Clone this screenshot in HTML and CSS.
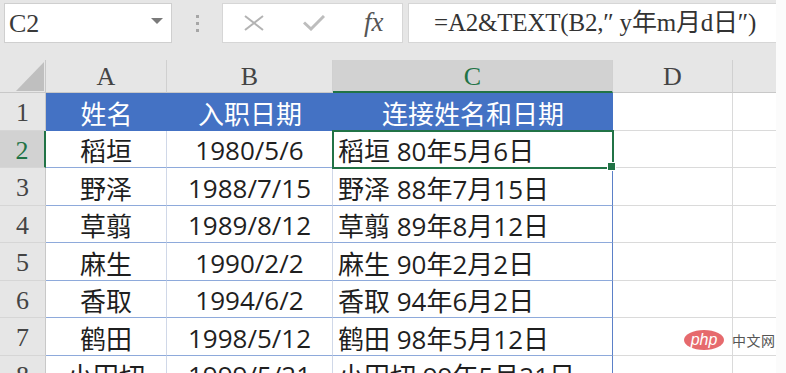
FILE: index.html
```html
<!DOCTYPE html>
<html lang="zh">
<head>
<meta charset="utf-8">
<title>Excel TEXT</title>
<link rel="stylesheet" href="styles.css">
</head>
<body>
<div class="screen">
  <div class="app">
    <div class="toolbar">
      <div class="namebox"><span class="ref">C2</span><span class="caret"></span></div>
      <div class="grip"><i></i><i></i><i></i></div>
      <div class="fxgroup">
        <svg class="ico-x" width="20" height="16" viewBox="0 0 20 16"><path d="M1 1 L19 15 M19 1 L1 15" stroke="#b3b3b3" stroke-width="2" fill="none"/></svg>
        <svg class="ico-ok" width="22" height="16" viewBox="0 0 22 16"><path d="M1 7.5 L8 14 L21 1" stroke="#bdbdbd" stroke-width="3" fill="none"/></svg>
        <span class="fx">fx</span>
      </div>
      <div class="formula">=A2&amp;TEXT(B2,″ y年m月d日″)</div>
    </div>
    <div class="sheet">
      <div class="corner"><span class="tri"></span></div>
      <div class="colh">A</div>
      <div class="colh">B</div>
      <div class="colh sel">C</div>
      <div class="colh">D</div>
      <div class="colh last"></div>

      <div class="rowh">1</div>
      <div class="th">姓名</div>
      <div class="th">入职日期</div>
      <div class="th">连接姓名和日期</div>
      <div class="cell"></div>
      <div class="cell last"></div>

      <div class="rowh sel">2</div>
      <div class="td">稻垣</div>
      <div class="td">1980/5/6</div>
      <div class="td tc active">稻垣 80年5月6日<span class="handle"></span></div>
      <div class="cell"></div>
      <div class="cell last"></div>

      <div class="rowh">3</div>
      <div class="td">野泽</div>
      <div class="td">1988/7/15</div>
      <div class="td tc">野泽 88年7月15日</div>
      <div class="cell"></div>
      <div class="cell last"></div>

      <div class="rowh">4</div>
      <div class="td">草翦</div>
      <div class="td">1989/8/12</div>
      <div class="td tc">草翦 89年8月12日</div>
      <div class="cell"></div>
      <div class="cell last"></div>

      <div class="rowh">5</div>
      <div class="td">麻生</div>
      <div class="td">1990/2/2</div>
      <div class="td tc">麻生 90年2月2日</div>
      <div class="cell"></div>
      <div class="cell last"></div>

      <div class="rowh">6</div>
      <div class="td">香取</div>
      <div class="td">1994/6/2</div>
      <div class="td tc">香取 94年6月2日</div>
      <div class="cell"></div>
      <div class="cell last"></div>

      <div class="rowh">7</div>
      <div class="td">鹤田</div>
      <div class="td">1998/5/12</div>
      <div class="td tc">鹤田 98年5月12日</div>
      <div class="cell"></div>
      <div class="cell last"></div>

      <div class="rowh">8</div>
      <div class="td">小田切</div>
      <div class="td">1999/5/21</div>
      <div class="td tc">小田切 99年5月21日</div>
      <div class="cell"></div>
      <div class="cell last"></div>
    </div>
    <div class="watermark"><span class="php">php</span><span class="cn">中文网</span></div>
  </div>
  <div class="strip"></div>
</div>
</body>
</html>
```
FILE: styles.css
```css
* { box-sizing: border-box; }
html, body { margin: 0; padding: 0; }
body {
  width: 786px;
  height: 373px;
  overflow: hidden;
  background: #fbfbfb;
}
.screen {
  display: flex;
  width: 786px;
  height: 373px;
  overflow: hidden;
}
.app {
  position: relative;
  width: 776px;
  flex: none;
  background: #e6e6e6;
}
.strip {
  flex: 1;
  background: #fbfbfb;
}

/* toolbar */
.toolbar {
  display: flex;
  align-items: flex-start;
  height: 60px;
  padding-top: 3px;
}
.namebox {
  margin-left: 4px;
  width: 168px;
  height: 40px;
  background: #fff;
  border: 1px solid #cfcfcf;
  display: flex;
  align-items: center;
  justify-content: space-between;
  padding: 0 8px 0 4px;
}
.ref {
  font-family: "Liberation Serif", serif;
  font-size: 26px;
  color: #3a3a3a;
  line-height: 1;
  padding-top: 2px;
}
.caret {
  width: 0;
  height: 0;
  border-left: 6px solid transparent;
  border-right: 6px solid transparent;
  border-top: 6px solid #7a7a7a;
  margin-top: -4px;
}
.grip {
  width: 50px;
  height: 40px;
  display: flex;
  flex-direction: column;
  align-items: center;
  justify-content: center;
  gap: 4px;
}
.grip i {
  display: block;
  width: 3px;
  height: 3px;
  background: #a6a6a6;
}
.fxgroup {
  width: 181px;
  height: 40px;
  background: #fff;
  border: 1px solid #d6d6d6;
  display: flex;
  align-items: center;
  padding-left: 21px;
}
.ico-x { margin-right: 39px; }
.ico-ok { margin-right: 39px; }
.fx {
  font-family: "Liberation Serif", serif;
  font-style: italic;
  font-size: 27px;
  color: #555;
  line-height: 1;
  margin-top: -2px;
}
.formula {
  margin-left: 5px;
  flex: 1;
  height: 40px;
  background: #fff;
  border: 1px solid #d6d6d6;
  border-right: none;
  font-family: "Liberation Serif", "Noto Sans CJK SC", serif;
  font-size: 25px;
  color: #333;
  line-height: 38px;
  padding-left: 25px;
  white-space: nowrap;
  letter-spacing: -0.2px;
}

/* sheet */
.sheet {
  display: grid;
  grid-template-columns: 46px 121px 166px 280px 120px 43px;
  grid-template-rows: 33px repeat(8, 37.5px);
  background: #fff;
}
.corner {
  background: #e6e6e6;
  border-right: 1px solid #c8c8c8;
  border-bottom: 1px solid #c8c8c8;
  position: relative;
}
.tri {
  position: absolute;
  left: 16px;
  top: 2px;
  width: 28px;
  height: 29px;
  background: #bfbfbf;
  clip-path: polygon(100% 0, 100% 100%, 0 100%);
}
.colh {
  background: #e6e6e6;
  border-right: 1px solid #d0d0d0;
  border-bottom: 1px solid #c8c8c8;
  font-family: "Liberation Serif", serif;
  font-size: 26px;
  color: #444;
  display: flex;
  align-items: center;
  justify-content: center;
  padding-top: 2px;
}
.colh.sel {
  background: #d2d2d2;
  color: #217346;
  border-bottom: 2px solid #217346;
}
.colh.last { border-right: none; }
.rowh {
  background: #e6e6e6;
  border-right: 1px solid #c8c8c8;
  border-bottom: 1px solid #d6d6d6;
  font-family: "Liberation Serif", serif;
  font-size: 26px;
  color: #444;
  display: flex;
  align-items: center;
  justify-content: center;
  padding-top: 4px;
}
.rowh.sel {
  background: #d2d2d2;
  color: #217346;
  border-right: 2px solid #217346;
}
.cell {
  border-right: 1px solid #dadada;
  border-bottom: 1px solid #dadada;
}
.cell.last { border-right: none; }
.th {
  background: #4472c4;
  color: #fff;
  font-family: "Open Sans", "Noto Sans CJK SC", sans-serif;
  font-size: 26px;
  display: flex;
  align-items: center;
  justify-content: center;
  padding-top: 2px;
  white-space: nowrap;
}
.td {
  border-right: 1px solid #d0d8e8;
  border-bottom: 1px solid #8eaadb;
  font-family: "Open Sans", "Noto Sans CJK SC", sans-serif;
  font-size: 26px;
  color: #1f1f1f;
  display: flex;
  align-items: center;
  justify-content: center;
  padding-top: 3px;
  white-space: nowrap;
}
.td.tc {
  justify-content: flex-start;
  padding-left: 5px;
  border-right: 1px solid #5b80c8;
  position: relative;
}
.td.active {
  outline: 2px solid #217346;
  outline-offset: -1px;
  z-index: 2;
}
.handle {
  position: absolute;
  right: -4px;
  bottom: -4px;
  width: 7px;
  height: 7px;
  background: #217346;
  border: 1px solid #fff;
  box-sizing: content-box;
}

/* watermark */
.watermark {
  position: absolute;
  left: 684px;
  top: 330px;
  display: flex;
  align-items: center;
  gap: 8px;
}
.php {
  width: 40px;
  height: 20px;
  border-radius: 50%;
  background: #e66a6d;
  color: #fff;
  font-family: "Liberation Sans", sans-serif;
  font-style: italic;
  font-size: 16px;
  line-height: 19px;
  text-align: center;
}
.cn {
  font-family: "Noto Sans CJK SC", sans-serif;
  font-size: 14px;
  color: #555;
  letter-spacing: 0.5px;
}
```
